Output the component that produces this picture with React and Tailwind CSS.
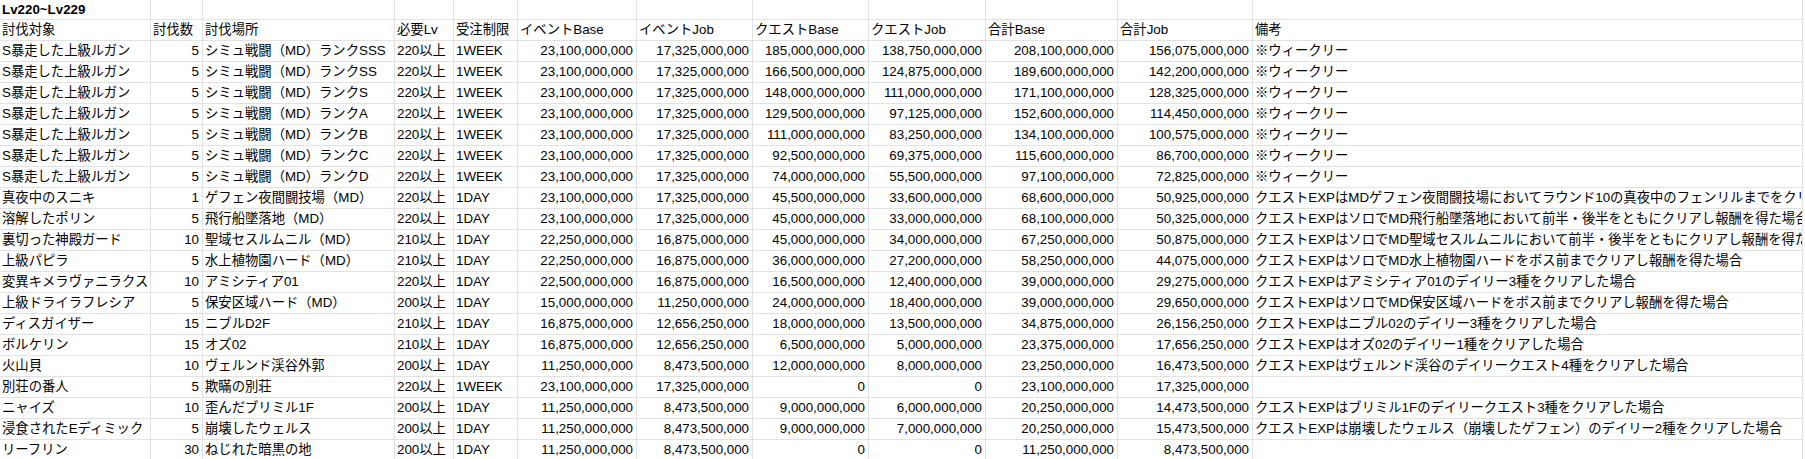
const headers = [
  "討伐対象",
  "討伐数",
  "討伐場所",
  "必要Lv",
  "受注制限",
  "イベントBase",
  "イベントJob",
  "クエストBase",
  "クエストJob",
  "合計Base",
  "合計Job",
  "備考",
];

const rows = [
  ["S暴走した上級ルガン", "5", "シミュ戦闘（MD）ランクSSS", "220以上", "1WEEK", "23,100,000,000", "17,325,000,000", "185,000,000,000", "138,750,000,000", "208,100,000,000", "156,075,000,000", "※ウィークリー"],
  ["S暴走した上級ルガン", "5", "シミュ戦闘（MD）ランクSS", "220以上", "1WEEK", "23,100,000,000", "17,325,000,000", "166,500,000,000", "124,875,000,000", "189,600,000,000", "142,200,000,000", "※ウィークリー"],
  ["S暴走した上級ルガン", "5", "シミュ戦闘（MD）ランクS", "220以上", "1WEEK", "23,100,000,000", "17,325,000,000", "148,000,000,000", "111,000,000,000", "171,100,000,000", "128,325,000,000", "※ウィークリー"],
  ["S暴走した上級ルガン", "5", "シミュ戦闘（MD）ランクA", "220以上", "1WEEK", "23,100,000,000", "17,325,000,000", "129,500,000,000", "97,125,000,000", "152,600,000,000", "114,450,000,000", "※ウィークリー"],
  ["S暴走した上級ルガン", "5", "シミュ戦闘（MD）ランクB", "220以上", "1WEEK", "23,100,000,000", "17,325,000,000", "111,000,000,000", "83,250,000,000", "134,100,000,000", "100,575,000,000", "※ウィークリー"],
  ["S暴走した上級ルガン", "5", "シミュ戦闘（MD）ランクC", "220以上", "1WEEK", "23,100,000,000", "17,325,000,000", "92,500,000,000", "69,375,000,000", "115,600,000,000", "86,700,000,000", "※ウィークリー"],
  ["S暴走した上級ルガン", "5", "シミュ戦闘（MD）ランクD", "220以上", "1WEEK", "23,100,000,000", "17,325,000,000", "74,000,000,000", "55,500,000,000", "97,100,000,000", "72,825,000,000", "※ウィークリー"],
  ["真夜中のスニキ", "1", "ゲフェン夜間闘技場（MD）", "220以上", "1DAY", "23,100,000,000", "17,325,000,000", "45,500,000,000", "33,600,000,000", "68,600,000,000", "50,925,000,000", "クエストEXPはMDゲフェン夜間闘技場においてラウンド10の真夜中のフェンリルまでをクリアし報酬を得た場合"],
  ["溶解したポリン", "5", "飛行船墜落地（MD）", "220以上", "1DAY", "23,100,000,000", "17,325,000,000", "45,000,000,000", "33,000,000,000", "68,100,000,000", "50,325,000,000", "クエストEXPはソロでMD飛行船墜落地において前半・後半をともにクリアし報酬を得た場合"],
  ["裏切った神殿ガード", "10", "聖域セスルムニル（MD）", "210以上", "1DAY", "22,250,000,000", "16,875,000,000", "45,000,000,000", "34,000,000,000", "67,250,000,000", "50,875,000,000", "クエストEXPはソロでMD聖域セスルムニルにおいて前半・後半をともにクリアし報酬を得た場合"],
  ["上級パピラ", "5", "水上植物園ハード（MD）", "210以上", "1DAY", "22,250,000,000", "16,875,000,000", "36,000,000,000", "27,200,000,000", "58,250,000,000", "44,075,000,000", "クエストEXPはソロでMD水上植物園ハードをボス前までクリアし報酬を得た場合"],
  ["変異キメラヴァニラクス", "10", "アミシティア01", "220以上", "1DAY", "22,500,000,000", "16,875,000,000", "16,500,000,000", "12,400,000,000", "39,000,000,000", "29,275,000,000", "クエストEXPはアミシティア01のデイリー3種をクリアした場合"],
  ["上級ドライラフレシア", "5", "保安区域ハード（MD）", "200以上", "1DAY", "15,000,000,000", "11,250,000,000", "24,000,000,000", "18,400,000,000", "39,000,000,000", "29,650,000,000", "クエストEXPはソロでMD保安区域ハードをボス前までクリアし報酬を得た場合"],
  ["ディスガイザー", "15", "ニブルD2F", "210以上", "1DAY", "16,875,000,000", "12,656,250,000", "18,000,000,000", "13,500,000,000", "34,875,000,000", "26,156,250,000", "クエストEXPはニブル02のデイリー3種をクリアした場合"],
  ["ボルケリン", "15", "オズ02", "210以上", "1DAY", "16,875,000,000", "12,656,250,000", "6,500,000,000", "5,000,000,000", "23,375,000,000", "17,656,250,000", "クエストEXPはオズ02のデイリー1種をクリアした場合"],
  ["火山貝", "10", "ヴェルンド渓谷外郭", "200以上", "1DAY", "11,250,000,000", "8,473,500,000", "12,000,000,000", "8,000,000,000", "23,250,000,000", "16,473,500,000", "クエストEXPはヴェルンド渓谷のデイリークエスト4種をクリアした場合"],
  ["別荘の番人", "5", "欺瞞の別荘", "220以上", "1WEEK", "23,100,000,000", "17,325,000,000", "0", "0", "23,100,000,000", "17,325,000,000", ""],
  ["ニャイズ", "10", "歪んだブリミル1F", "200以上", "1DAY", "11,250,000,000", "8,473,500,000", "9,000,000,000", "6,000,000,000", "20,250,000,000", "14,473,500,000", "クエストEXPはブリミル1Fのデイリークエスト3種をクリアした場合"],
  ["浸食されたEディミック", "5", "崩壊したウェルス", "200以上", "1DAY", "11,250,000,000", "8,473,500,000", "9,000,000,000", "7,000,000,000", "20,250,000,000", "15,473,500,000", "クエストEXPは崩壊したウェルス（崩壊したゲフェン）のデイリー2種をクリアした場合"],
  ["リーフリン", "30", "ねじれた暗黒の地", "200以上", "1DAY", "11,250,000,000", "8,473,500,000", "0", "0", "11,250,000,000", "8,473,500,000", ""],
];

// numeric columns are right aligned
const numeric = [1, 5, 6, 7, 8, 9, 10];

const grid =
  "grid grid-cols-[151px_52px_192px_59px_64px_119px_116px_116px_117px_132px_135px_550px]";

function Cell({ children, right, bold, tall = "h-[21px]" }) {
  return (
    <div
      className={`${tall} flex items-center overflow-hidden whitespace-nowrap border-r border-b border-[#e2e2e2] ${
        right ? "justify-end pr-[3px]" : "pl-[2px]"
      } ${bold ? "font-bold" : ""}`}
    >
      {children}
    </div>
  );
}

export default function App() {
  return (
    <div
      className="w-[1805px] h-[459px] overflow-hidden bg-white text-[13.33px] leading-none text-black"
      style={{ fontFamily: '"Liberation Sans", "Noto Sans CJK JP", sans-serif' }}
    >
      {/* title row */}
      <div className={grid}>
        {headers.map((_, i) => (
          <Cell key={i} bold tall="h-[20px]">
            {i === 0 ? "Lv220~Lv229" : ""}
          </Cell>
        ))}
      </div>

      {/* header row */}
      <div className={grid}>
        {headers.map((h) => (
          <Cell key={h}>{h}</Cell>
        ))}
      </div>

      {/* data rows */}
      {rows.map((r, ri) => (
        <div key={ri} className={grid}>
          {r.map((v, ci) => (
            <Cell key={ci} right={numeric.includes(ci)}>
              {v}
            </Cell>
          ))}
        </div>
      ))}
    </div>
  );
}
